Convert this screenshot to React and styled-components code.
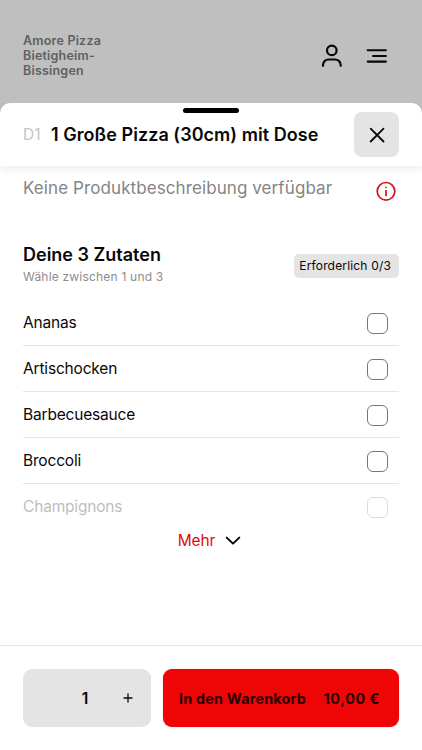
import React from 'react';
import styled, { createGlobalStyle } from 'styled-components';

const GlobalStyle = createGlobalStyle`
  * {
    box-sizing: border-box;
  }
  body {
    margin: 0;
    background: #bfbfbf;
    font-family: Inter, 'Liberation Sans', sans-serif;
    color: #080808;
  }
  button {
    font: inherit;
    color: inherit;
    border: 0;
    padding: 0;
    margin: 0;
    background: none;
  }
  h1, h2, p, ul {
    margin: 0;
    padding: 0;
  }
  svg {
    display: block;
  }
`;

const Page = styled.div`
  display: flex;
  flex-direction: column;
  height: 750px;
  overflow: hidden;
`;

const TopBar = styled.header`
  display: flex;
  justify-content: space-between;
  flex: 0 0 103px;
  padding: 33px 33px 0 23px;
`;

const Brand = styled.div`
  width: 100px;
  font-size: 12.5px;
  line-height: 15px;
  font-weight: 600;
  letter-spacing: 0.2px;
  color: #606060;
`;

const TopActions = styled.div`
  display: flex;
  gap: 20px;
  height: 46px;
  align-items: center;
`;

const Sheet = styled.main`
  display: flex;
  flex-direction: column;
  flex: 1;
  background: #fff;
  border-radius: 10px 10px 0 0;
  min-height: 0;
`;

const SheetHeader = styled.div`
  position: relative;
  display: flex;
  align-items: center;
  flex: 0 0 63px;
  padding: 0 23px;
  border-radius: 10px 10px 0 0;
  box-shadow: 0 3px 8px rgba(0, 0, 0, 0.08);
  clip-path: inset(0 0 -14px 0);
`;

const Handle = styled.div`
  position: absolute;
  top: 5px;
  left: 50%;
  width: 56px;
  height: 5px;
  margin-left: -28px;
  border-radius: 3px;
  background: #000;
`;

const ProductCode = styled.span`
  width: 28px;
  font-size: 15.5px;
  font-weight: 400;
  color: #c4c4c4;
`;

const ProductTitle = styled.h1`
  flex: 1;
  font-size: 18px;
  line-height: 24px;
  font-weight: 600;
  letter-spacing: 0.05px;
  white-space: nowrap;
`;

const CloseButton = styled.button`
  display: flex;
  align-items: center;
  justify-content: center;
  width: 45px;
  height: 45px;
  border-radius: 8px;
  background: #e4e4e4;
`;

const Content = styled.div`
  flex: 1;
  padding: 9px 23px 0;
`;

const Description = styled.div`
  display: flex;
  justify-content: space-between;
  height: 69px;
  font-size: 17px;
  line-height: 26px;
  letter-spacing: 0.09px;
  color: #858585;
  white-space: nowrap;

  svg {
    margin: 6px 3px 0 0;
  }
`;

const GroupHeader = styled.div`
  display: flex;
  justify-content: space-between;
  height: 56px;
`;

const GroupTitle = styled.h2`
  font-size: 18px;
  line-height: 22px;
  font-weight: 600;
`;

const GroupHint = styled.p`
  font-size: 12px;
  line-height: 22px;
  letter-spacing: 0.2px;
  color: #8c8c8c;
`;

const Badge = styled.span`
  height: 24px;
  margin-top: 10px;
  padding: 0 8px 0 5px;
  border-radius: 5px;
  background: #e4e4e4;
  font-size: 12px;
  line-height: 24px;
  letter-spacing: 0.17px;
  white-space: nowrap;
`;

const Ingredients = styled.ul`
  list-style: none;
`;

const Ingredient = styled.li`
  display: flex;
  align-items: center;
  justify-content: space-between;
  height: 46px;
  padding-right: 11px;
  border-bottom: 1px solid ${props => (props.$faded ? 'transparent' : '#e4e4e4')};
  font-size: 15.5px;
  letter-spacing: -0.18px;

  > * {
    opacity: ${props => (props.$faded ? 0.27 : 1)};
  }
`;

const Checkbox = styled.span`
  width: 21px;
  height: 21px;
  margin-top: 1px;
  border: 1px solid #777;
  border-radius: 6px;
`;

const MoreButton = styled.button`
  display: flex;
  align-items: center;
  gap: 10px;
  height: 22px;
  margin: -1px auto 0;
  padding-right: 3px;
  font-size: 15.5px;
  letter-spacing: -0.15px;
  color: #dc0b0b;
`;

const Footer = styled.footer`
  display: flex;
  gap: 12px;
  flex: 0 0 105px;
  padding: 23px 23px 0;
  border-top: 1px solid #e4e4e4;
`;

const Quantity = styled.div`
  display: grid;
  grid-template-columns: 38px 48px 38px;
  align-items: center;
  justify-items: center;
  width: 128px;
  height: 58px;
  border-radius: 9px;
  background: #e4e4e4;
`;

const Amount = styled.span`
  grid-column: 2;
  font-size: 15.5px;
  font-weight: 600;
`;

const CartButton = styled.button`
  display: flex;
  align-items: center;
  justify-content: space-between;
  flex: 1;
  height: 58px;
  padding: 0 19px 0 16px;
  border-radius: 9px;
  background: #ef0505;
  box-shadow: 0 0 1px rgba(239, 5, 5, 0.6);
  color: #260000;
  font-size: 14.3px;
  font-weight: 700;
  letter-spacing: 0.25px;
  white-space: nowrap;
`;

const Price = styled.span`
  letter-spacing: 0.6px;
`;

const Icon = ({ width, height, stroke = 2, color = '#080808', children }) => (
  <svg
    width={width}
    height={height}
    viewBox={`0 0 ${width} ${height}`}
    fill="none"
    stroke={color}
    strokeWidth={stroke}
    strokeLinecap="round"
    strokeLinejoin="round"
  >
    {children}
  </svg>
);

const ingredients = [
  'Ananas',
  'Artischocken',
  'Barbecuesauce',
  'Broccoli',
  'Champignons'
];

const App = () => (
  <>
    <GlobalStyle />
    <Page>
      <TopBar>
        <Brand>
          Amore Pizza<br />Bietigheim-<br />Bissingen
        </Brand>
        <TopActions>
          <Icon width={26} height={26} stroke={2.2}>
            <circle cx="12.8" cy="7.4" r="4.8" />
            <path d="M4 22.8v-.8a5.5 5.5 0 0 1 5.5-5.5h6.7a5.5 5.5 0 0 1 5.5 5.5v.8" />
          </Icon>
          <Icon width={24} height={24} stroke={2.1}>
            <path d="M2.7 6.3h18.2M8 12h12.9M2.7 17.6h18.2" />
          </Icon>
        </TopActions>
      </TopBar>
      <Sheet>
        <SheetHeader>
          <Handle />
          <ProductCode>D1</ProductCode>
          <ProductTitle>1 Große Pizza (30cm) mit Dose</ProductTitle>
          <CloseButton aria-label="Schließen">
            <Icon width={16} height={16} stroke={1.8}>
              <path d="M1.7 1.7l12.8 12.8M14.5 1.7l-12.8 12.8" />
            </Icon>
          </CloseButton>
        </SheetHeader>
        <Content>
          <Description>
            <p>Keine Produktbeschreibung verfügbar</p>
            <Icon width={20} height={20} stroke={1.7} color="#d51313">
              <circle cx="10" cy="10.3" r="8.8" />
              <path d="M10 9.5v5" />
              <path d="M10 6.4v.1" />
            </Icon>
          </Description>
          <GroupHeader>
            <div>
              <GroupTitle>Deine 3 Zutaten</GroupTitle>
              <GroupHint>Wähle zwischen 1 und 3</GroupHint>
            </div>
            <Badge>Erforderlich 0/3</Badge>
          </GroupHeader>
          <Ingredients>
            {ingredients.map((name, i) => (
              <Ingredient key={name} $faded={i === ingredients.length - 1}>
                <span>{name}</span>
                <Checkbox />
              </Ingredient>
            ))}
          </Ingredients>
          <MoreButton>
            Mehr
            <Icon width={16} height={10} stroke={2}>
              <path d="M1.7 2.6L8 8.6l6.3-6" />
            </Icon>
          </MoreButton>
        </Content>
        <Footer>
          <Quantity>
            <Amount>1</Amount>
            <Icon width={10} height={10} stroke={1.3}>
              <path d="M5 1v8M1 5h8" />
            </Icon>
          </Quantity>
          <CartButton>
            <span>In den Warenkorb</span>
            <Price>10,00 €</Price>
          </CartButton>
        </Footer>
      </Sheet>
    </Page>
  </>
);

export default App;
